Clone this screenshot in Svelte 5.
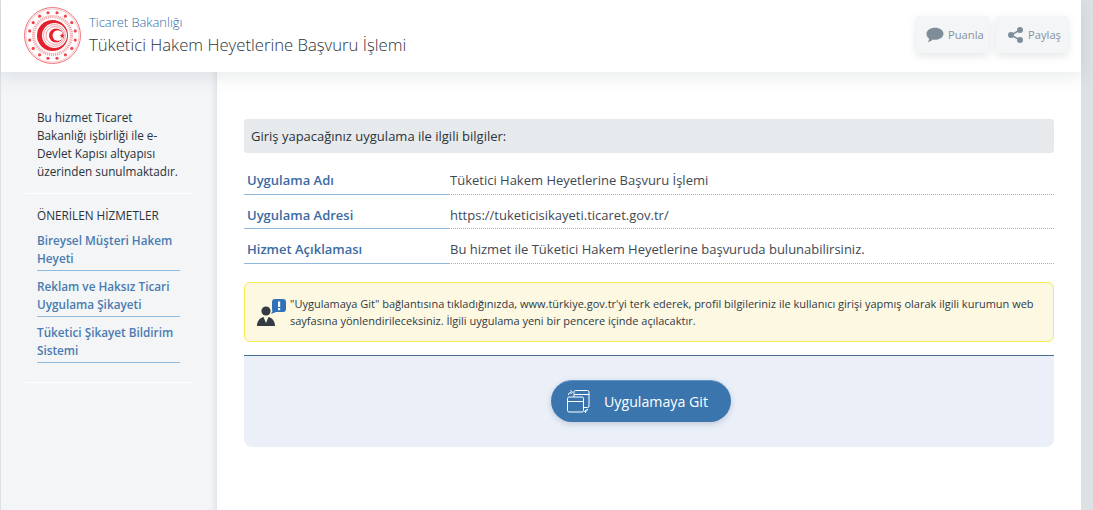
<script>
  const dots = Array.from({ length: 16 }, (_, i) => {
    const a = (i * Math.PI) / 8 + Math.PI / 16;
    return { x: 28.5 + 23.2 * Math.cos(a), y: 28.5 + 23.2 * Math.sin(a) };
  });
  const links = [
    ['Bireysel Müşteri Hakem', 'Heyeti'],
    ['Reklam ve Haksız Ticari', 'Uygulama Şikayeti'],
    ['Tüketici Şikayet Bildirim', 'Sistemi']
  ];
  const rows = [
    ['Uygulama Adı', 'Tüketici Hakem Heyetlerine Başvuru İşlemi'],
    ['Uygulama Adresi', 'https://tuketicisikayeti.ticaret.gov.tr/'],
    ['Hizmet Açıklaması', 'Bu hizmet ile Tüketici Hakem Heyetlerine başvuruda bulunabilirsiniz.']
  ];
</script>

<div class="shell">
  <header class="top">
    <svg class="logo" width="57" height="57" viewBox="0 0 57 57" fill="none">
      <circle cx="28.500" cy="28.500" r="28" stroke="#f0747b" stroke-width="1" />
      <circle cx="28.500" cy="28.500" r="26.600" stroke="#f7b5b8" stroke-width="0.800" />
      {#each dots as d}
        <circle cx={d.x} cy={d.y} r="1.600" fill="#ec4650" />
      {/each}
      <circle cx="28.500" cy="28.500" r="19" stroke="#f5a9ad" stroke-width="3.200" stroke-dasharray="1.200 0.800" />
      <circle cx="28.500" cy="28.500" r="15.500" fill="#e3222d" />
      <circle cx="30.500" cy="28.500" r="12.500" fill="#fff" />
      <circle cx="30.500" cy="28.500" r="11" stroke="#f1888f" stroke-width="0.800" />
      <circle cx="31" cy="28.500" r="9" stroke="#ee7d85" stroke-width="0.800" />
      <circle cx="32" cy="28.500" r="7" fill="#e3222d" />
      <circle cx="33.800" cy="28.500" r="5.200" fill="#fff" />
      <path d="M38.200 26l.7 1.800 1.900.1-1.500 1.200.5 1.800-1.600-1-1.600 1 .5-1.800-1.500-1.200 1.900-.1z" fill="#e3222d" />
    </svg>
    <div class="titles">
      <div class="ministry">Ticaret Bakanlığı</div>
      <div class="title">Tüketici Hakem Heyetlerine Başvuru İşlemi</div>
    </div>
    <div class="actions">
      <button class="act rate">
        <svg width="18" height="16" viewBox="0 0 18 16"><path d="M9 .8c4.700 0 8.500 2.600 8.500 6s-3.800 6-8.500 6c-.8 0-1.600-.1-2.300-.2C5.300 14 3.500 15 1.500 15.200c.9-.9 1.500-2 1.700-3.500C1.400 10.600.5 9 .5 6.800c0-3.400 3.800-6 8.500-6z" fill="#7f8d9b" /></svg>
        <span>Puanla</span>
      </button>
      <button class="act share">
        <svg width="15" height="16" viewBox="0 0 15 16"><g fill="#7f8d9b"><circle cx="3" cy="8" r="3" /><circle cx="12" cy="3" r="3" /><circle cx="12" cy="13" r="3" /></g><path d="M3 8l9-5M3 8l9 5" stroke="#7f8d9b" stroke-width="1.500" /></svg>
        <span>Paylaş</span>
      </button>
    </div>
  </header>

  <div class="body">
    <aside class="side">
      <p class="note">Bu hizmet Ticaret Bakanlığı işbirliği ile e-Devlet Kapısı altyapısı üzerinden sunulmaktadır.</p>
      <div class="recs">
        <h4>ÖNERİLEN HİZMETLER</h4>
        {#each links as l}
          <a class="rec" href="#top">{l[0]}<br />{l[1]}</a>
        {/each}
      </div>
    </aside>

    <main class="content">
      <div class="heading">Giriş yapacağınız uygulama ile ilgili bilgiler:</div>
      <dl class="rows">
        {#each rows as r}
          <div class="row">
            <dt>{r[0]}</dt>
            <dd>{r[1]}</dd>
          </div>
        {/each}
      </dl>
      <div class="alert">
        <svg class="alert-icon" width="29" height="27" viewBox="0 0 29 27">
          <rect x="15" y="0" width="14" height="13" rx="3" fill="#2f72ba" />
          <path d="M16 11l-2 4 5-2z" fill="#2f72ba" />
          <rect x="21" y="2.500" width="2.200" height="5.500" fill="#fff" />
          <rect x="21" y="9" width="2.200" height="2.200" fill="#fff" />
          <circle cx="9" cy="12" r="4.600" fill="#333c44" />
          <path d="M0 27c0-4.500 2.500-8 6.500-9L9 24l2.500-6c4 1 6.500 4.500 6.500 9z" fill="#333c44" />
        </svg>
        <p>"Uygulamaya Git" bağlantısına tıkladığınızda, www.türkiye.gov.tr'yi terk ederek, profil bilgileriniz ile kullanıcı girişi yapmış olarak ilgili kurumun web sayfasına yönlendirileceksiniz. İlgili uygulama yeni bir pencere içinde açılacaktır.</p>
      </div>
      <div class="panel">
        <button class="go">
          <svg width="23" height="24" viewBox="0 0 23 24" fill="none" stroke="#fff" stroke-width="1">
            <path d="M7 8V3a1.500 1.500 0 0 1 1.500-1.500h12A1.500 1.500 0 0 1 22 3v14a1.500 1.500 0 0 1-1.500 1.500h-4" />
            <path d="M7 5.500h15" />
            <rect x="0.500" y="8" width="16" height="15" rx="1.500" />
            <path d="M.5 12.500h16" />
            <path d="M1.500 6c0-1.800 1-2.800 3-2.800M3.500 1.200l2 2-2 2M20.500 20c0 1.500-1 2.500-2.500 2.500M19.500 24.500l-2-2 2-2" />
          </svg>
          <span>Uygulamaya Git</span>
        </button>
      </div>
    </main>
  </div>
</div>

<style>
  :global(body) {
    margin: 0;
    background: #dce1e4;
    font-family: "Open Sans", sans-serif;
    overflow: hidden;
  }
  .shell {
    width: 1080px;
    height: 510px;
    margin-left: 1px;
    display: flex;
    flex-direction: column;
    background: #fff;
  }
  .top {
    height: 72px;
    flex: none;
    box-sizing: border-box;
    display: flex;
    align-items: center;
    padding: 0 13px 0 23px;
    background: #fff;
    box-shadow: 0 4px 18px rgba(60, 70, 80, 0.12);
    position: relative;
    z-index: 2;
  }
  .logo {
    flex: none;
    margin-right: 8px;
    margin-top: -2px;
  }
  .titles {
    flex: 1;
    margin-top: -3px;
  }
  .ministry {
    font-size: 12.900px;
    line-height: 18px;
    font-weight: 300;
    color: #2f6aa8;
  }
  .title {
    font-size: 16.700px;
    line-height: 24px;
    margin-top: 2px;
    color: #2b333b;
    font-weight: 300;
  }
  .actions {
    display: flex;
    gap: 7px;
    margin-top: -3px;
  }
  .act {
    height: 37px;
    border: 0;
    border-radius: 4px;
    background: #f3f5f7;
    box-shadow: 0 3px 8px rgba(50, 60, 70, 0.13);
    display: flex;
    align-items: center;
    gap: 4px;
    padding: 0 0 0 10px;
    font-family: inherit;
    font-size: 11.200px;
    color: #8492a0;
  }
  .act svg {
    flex: none;
  }
  .rate {
    width: 73px;
  }
  .share {
    width: 72px;
    padding-left: 12px;
    gap: 5px;
  }
  .body {
    flex: 1;
    display: flex;
    min-height: 0;
  }
  .side {
    width: 216px;
    flex: none;
    box-sizing: border-box;
    background: #f3f5f7;
    padding: 36px 25px 0 24px;
    box-shadow: inset -6px 0 6px -5px rgba(60, 70, 80, 0.14);
  }
  .note {
    margin: 0;
    padding: 0 10px 13px 12px;
    font-size: 11.750px;
    line-height: 18px;
    color: #2b333b;
    border-bottom: 1px solid #fff;
  }
  .recs {
    padding: 12px 12px 13px;
    border-bottom: 1px solid #fff;
  }
  h4 {
    margin: 0 0 7px;
    font-size: 11.750px;
    line-height: 18px;
    font-weight: 400;
    color: #2b333b;
  }
  .rec {
    display: block;
    padding-bottom: 3px;
    margin-bottom: 6px;
    font-size: 11.750px;
    line-height: 18px;
    font-weight: 600;
    color: #4a7bb0;
    text-decoration: none;
    border-bottom: 1px solid #8fbbe0;
  }
  .content {
    flex: 1;
    box-sizing: border-box;
    padding: 47px 27px 0;
  }
  .heading {
    height: 34px;
    line-height: 34px;
    padding-left: 7px;
    font-size: 13px;
    color: #2b333b;
    background: #e7eaed;
    border-radius: 3px;
  }
  .rows {
    margin: 7px 0 18px;
  }
  .row {
    height: 34.600px;
    display: flex;
    font-size: 13px;
  }
  dt {
    width: 204px;
    box-sizing: border-box;
    padding-left: 3px;
    line-height: 40px;
    font-weight: 600;
    color: #3a6ba3;
    border-bottom: 1px solid #8fb8dc;
  }
  dd {
    flex: 1;
    margin: 0;
    padding-left: 2px;
    line-height: 40px;
    color: #3f4953;
    border-bottom: 1px dotted #a5adb5;
  }
  .alert {
    box-sizing: border-box;
    height: 60px;
    display: flex;
    align-items: center;
    padding: 0 12px;
    gap: 4px;
    background: #fdf8e2;
    border: 1px solid #f7ea53;
    border-radius: 6px;
    margin-bottom: 13px;
  }
  .alert-icon {
    flex: none;
    margin-top: 2px;
  }
  .alert p {
    margin: 0;
    font-size: 11px;
    line-height: 17px;
    color: #2f3a44;
  }
  .panel {
    display: flex;
    justify-content: center;
    padding: 24px 16px 0 0;
    height: 67px;
    background: #ebf0f8;
    border-top: 1px solid #4a6f96;
    border-radius: 0 0 8px 8px;
  }
  .go {
    width: 180px;
    height: 42px;
    border: 0;
    border-top: 1px solid #5f93c5;
    border-radius: 21px;
    background: #3a75ad;
    box-shadow: 0 2px 6px rgba(40, 70, 110, 0.22);
    display: flex;
    align-items: center;
    gap: 14px;
    padding: 0 0 0 16px;
    font-family: inherit;
    font-size: 14.200px;
    color: #fff;
  }
  .go svg {
    flex: none;
  }
</style>
